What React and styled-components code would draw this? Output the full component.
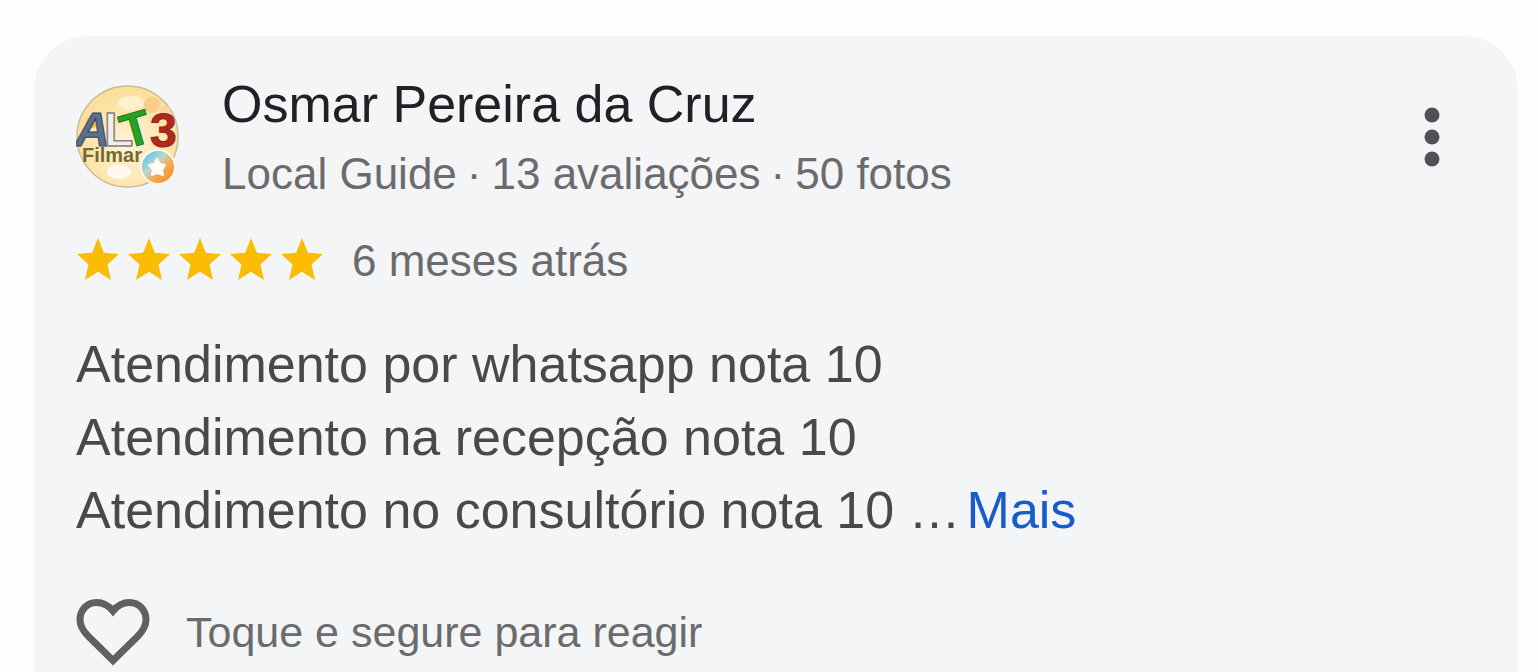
import React from 'react';
import styled, { createGlobalStyle } from 'styled-components';

const GlobalStyle = createGlobalStyle`
  *, *::before, *::after { box-sizing: border-box; }
  body {
    margin: 0;
    background: #fefefe;
    font-family: "Liberation Sans", Arial, sans-serif;
  }
`;

const Page = styled.main`
  display: flex;
  min-height: 100vh;
  padding: 36px 20px 0 34px;
`;

const Card = styled.article`
  flex: 1;
  min-width: 0;
  padding: 33px 42px 4px;
  border-radius: 54px 54px 0 0;
  background: #f3f5f7;
`;

const Header = styled.header`
  display: flex;
  align-items: flex-start;
  gap: 43px;
`;

const Avatar = styled.svg`
  flex: none;
  width: 103px;
  height: 103px;
  margin-top: 16px;
`;

const Author = styled.div`
  flex: 1;
  min-width: 0;
`;

const Name = styled.h2`
  margin: 0;
  color: #202124;
  font-size: 52px;
  font-weight: 400;
  line-height: 70px;
`;

const Meta = styled.p`
  display: flex;
  gap: 10px;
  margin: 0;
  color: #6b6b6d;
  font-size: 44px;
  line-height: ${({ $line }) => $line || 52}px;
`;

const MenuButton = styled.button`
  flex: none;
  display: flex;
  justify-content: center;
  width: 88px;
  margin-top: 38px;
  padding: 0;
  border: 0;
  background: none;
  cursor: pointer;
`;

const Rating = styled.div`
  display: flex;
  align-items: center;
  gap: 29px;
  margin-top: 26px;
`;

const Stars = styled.div`
  display: flex;
  gap: 9px;
  padding: 0 0 4px 1px;
`;

const Comment = styled.p`
  margin: 41px 0 0;
  color: #48494b;
  font-size: 52px;
  line-height: 73px;
`;

const MoreButton = styled.button`
  margin-left: 6px;
  padding: 0;
  border: 0;
  background: none;
  color: #1a5bcb;
  font: inherit;
  cursor: pointer;
`;

const ReactButton = styled.button`
  display: flex;
  align-items: center;
  gap: 36px;
  margin-top: 51px;
  padding: 0;
  border: 0;
  background: none;
  color: #6b6b6d;
  font-family: inherit;
  font-size: 43px;
  line-height: 60px;
  cursor: pointer;
`;

function Star() {
  return (
    <svg width="42" height="42" viewBox="2 2 20 19" preserveAspectRatio="none" fill="#fbbc04" aria-hidden="true">
      <path d="M12 17.27 18.18 21l-1.64-7.03L22 9.24l-7.19-.61L12 2 9.19 8.63 2 9.24l5.46 4.73L5.82 21z" />
    </svg>
  );
}

function AuthorAvatar() {
  return (
    <Avatar viewBox="0 0 103 103" role="img" aria-label="ALT3 Filmar">
      <defs>
        <radialGradient id="disc" cx="50%" cy="60%" r="55%">
          <stop offset="0" stopColor="#fff3dc" />
          <stop offset="0.55" stopColor="#fde8b8" />
          <stop offset="1" stopColor="#fbdf9b" />
        </radialGradient>
        <linearGradient id="badge" x1="0" y1="0" x2="1" y2="1">
          <stop offset="0.1" stopColor="#62c4e4" />
          <stop offset="0.4" stopColor="#b6d9d3" />
          <stop offset="0.6" stopColor="#f8ab51" />
          <stop offset="1" stopColor="#ee8730" />
        </linearGradient>
      </defs>
      <circle cx="51.5" cy="51.5" r="50.5" fill="url(#disc)" stroke="#c9bd9b" strokeWidth="1.5" />
      <circle cx="76" cy="20" r="8" fill="#f8cf88" />
      <circle cx="89" cy="26" r="5" fill="#f9d79a" />
      <circle cx="16" cy="37" r="6" fill="#efc043" />
      <ellipse cx="55" cy="18" rx="13" ry="7" fill="#fff0d0" />
      <ellipse cx="43" cy="87" rx="12" ry="7" fill="#fff9f1" />
      <text y="61" fontFamily="Liberation Sans, Arial, sans-serif" fontWeight="700" fontSize="48">
        <tspan x="-1" fontStyle="italic" fill="#5a6f90" stroke="#3b4252" strokeWidth="1">A</tspan>
        <tspan x="28" fill="#f1efea" stroke="#85827e" strokeWidth="1.5">L</tspan>
        <tspan x="50" y="64" rotate="-16" fill="#28a321" stroke="#17771a" strokeWidth="1">T</tspan>
        <tspan x="74" y="62" rotate="0" fill="#b3281d" stroke="#8e231a" strokeWidth="1">3</tspan>
      </text>
      <text x="6" y="77" fill="#77692c" fontFamily="Liberation Sans, Arial, sans-serif" fontWeight="700" fontSize="20">Filmar</text>
      <circle cx="82" cy="82" r="18" fill="#fff7ea" />
      <circle cx="82" cy="82" r="16" fill="url(#badge)" />
      <path d="m81 74 3 5 5 1-3 5 1 5-6-2-5 2 1-5-4-5 5-1z" fill="#fffdf6" stroke="#fffdf6" strokeWidth="2" strokeLinejoin="round" />
    </Avatar>
  );
}

function Heart() {
  return (
    <svg width="74" height="68" viewBox="0 -1 74 68" fill="none" stroke="#5f6062" strokeWidth="7" aria-hidden="true">
      <path d="M37 61.500 12.500 37.500C7 32 4 27 4 21 4 11 11 3.500 20.500 3.500c6.500 0 12 3 16.500 8.500 4.500-5.500 10-8.500 16.500-8.500C63 3.500 70 11 70 21c0 6-3 11-8.500 16.500z" />
    </svg>
  );
}

export default function App() {
  return (
    <>
      <GlobalStyle />
      <Page>
        <Card>
          <Header>
            <AuthorAvatar />
            <Author>
              <Name>Osmar Pereira da Cruz</Name>
              <Meta $line={70}>
                <span>Local Guide</span>
                <span>·</span>
                <span>13 avaliações</span>
                <span>·</span>
                <span>50 fotos</span>
              </Meta>
            </Author>
            <MenuButton type="button" aria-label="Mais opções">
              <svg width="16" height="60" viewBox="0 0 16 60" fill="#505154" aria-hidden="true">
                <circle cx="8" cy="8" r="7.5" />
                <circle cx="8" cy="30" r="7.5" />
                <circle cx="8" cy="52" r="7.5" />
              </svg>
            </MenuButton>
          </Header>
          <Rating>
            <Stars role="img" aria-label="5 estrelas">
              {[1, 2, 3, 4, 5].map((n) => (
                <Star key={n} />
              ))}
            </Stars>
            <Meta>6 meses atrás</Meta>
          </Rating>
          <Comment>
            Atendimento por whatsapp nota 10
            <br />
            Atendimento na recepção nota 10
            <br />
            Atendimento no consultório nota 10 …<MoreButton type="button">Mais</MoreButton>
          </Comment>
          <ReactButton type="button">
            <Heart />
            Toque e segure para reagir
          </ReactButton>
        </Card>
      </Page>
    </>
  );
}
